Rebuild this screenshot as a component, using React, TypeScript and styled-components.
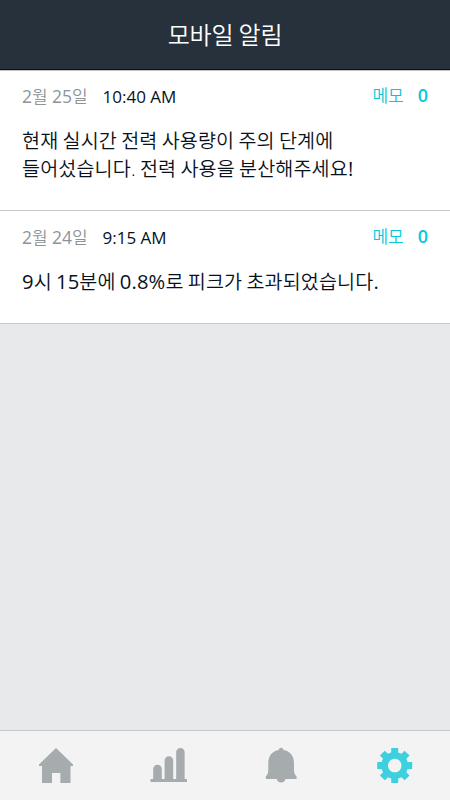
import React from 'react';
import styled, { createGlobalStyle } from 'styled-components';

const GlobalStyle = createGlobalStyle`
  * { box-sizing: border-box; }
  body { margin: 0; font-family: "Open Sans", "Noto Sans CJK KR", sans-serif; }
`;

const Screen = styled.div`
  width: 100%;
  height: 100vh;
  display: flex;
  flex-direction: column;
  background: #e8e9eb;
  overflow: hidden;
`;

const Header = styled.header`
  height: 70px;
  flex: none;
  display: flex;
  align-items: center;
  justify-content: center;
  padding-bottom: 2px;
  background: #26313c;
  border-bottom: 1px solid #0a131b;
`;

const Title = styled.h1`
  margin: 0;
  font: 350 24px/34px "Noto Sans CJK KR", sans-serif;
  letter-spacing: -0.2px;
  color: #fff;
`;

const List = styled.main`
  flex: 1;
  min-height: 0;
`;

const Card = styled.article`
  padding: 14px 22px 27px;
  background: #fff;
  border-bottom: 1px solid #c5c7c9;

  &:first-child {
    box-shadow: inset 0 1px #bfc1c3;
  }
`;

const Meta = styled.div`
  height: 26px;
  display: flex;
  align-items: baseline;
  font-size: 17px;
  font-weight: 350;
  line-height: 26px;
`;

const DateText = styled.span`
  width: 80.5px;
  color: #8d9499;
`;

const Latin = styled.span`
  font-size: 1.03em;
  font-weight: 400;
  line-height: 1;
`;

const Time = styled.span`
  font-weight: 400;
  color: #08121c;
`;

const Memo = styled.span`
  margin: -1px 0 0 auto;
  display: flex;
  align-items: baseline;
  gap: 14px;
  color: #06c8d9;
  position: relative;
  top: -1px;
`;

const Count = styled.b`
  font-size: 18px;
  font-weight: 600;
`;

const Message = styled.p`
  margin: 17px 0 0;
  font-size: 19.6px;
  font-weight: 350;
  line-height: 28px;
  letter-spacing: 0.12px;
  word-spacing: -1px;
  color: #08121c;
  white-space: pre-line;
`;

const Nav = styled.nav`
  height: 70px;
  flex: none;
  display: grid;
  grid-template-columns: repeat(4, 1fr);
  background: #f3f3f3;
  border-top: 1px solid #c8c9cb;
`;

const Tab = styled.button<{ $active?: boolean }>`
  display: flex;
  justify-content: center;
  padding: 15px 0 0;
  border: 0;
  background: none;
  color: ${(p) => (p.$active ? '#3dd0df' : '#a6abae')};
`;

const Icon = styled.svg`
  width: 40px;
  height: 40px;
  fill: currentColor;
`;

const alerts = [
  {
    date: '2월 25일',
    time: '10:40 AM',
    text: '현재 실시간 전력 사용량이 주의 단계에\n들어섰습니다. 전력 사용을 분산해주세요!',
    memos: 0,
  },
  { date: '2월 24일', time: '9:15 AM', text: '9시 15분에 0.8%로 피크가 초과되었습니다.', memos: 0 },
];

const tabs = [
  { label: '홈', path: 'M20 2 L37 18.5 V20 H34.5 V37 H24.4 V27 H16 V37 H6 V20 H3 V18.5 Z' },
  {
    label: '통계',
    path: 'M1.5 33 H4.2 V23 A4.3 4.3 0 0 1 12.8 23 V33 H15.6 V14.5 A4.3 4.3 0 0 1 24.2 14.5 V33 H27.2 V6.3 A4.2 4.2 0 0 1 35.6 6.3 V33 H38 V36 H1.5 Z',
  },
  {
    label: '알림',
    path: 'M17.8 4 A2.3 2.3 0 0 1 22.4 4 C29 5 33 10 33 17 V24 C33 27 34 29 35.6 30.3 V33 H24.5 A4.5 4.3 0 0 1 15.7 33 H4.8 V30.3 C6.4 29 7.3 27 7.3 24 V17 C7.3 10 11.3 5 17.8 4 Z',
  },
];

const gearTeeth = [0, 45, 90, 135, 180, 225, 270, 315];

// Numbers and closing marks take the regular weight so they balance the lighter Hangul.
const mixed = (text: string) =>
  text.split(/([0-9][0-9.%]*|[.!]$)/).map((part, i) => (i % 2 ? <Latin key={i}>{part}</Latin> : part));

export default function App() {
  return (
    <>
      <GlobalStyle />
      <Screen>
        <Header>
          <Title>모바일 알림</Title>
        </Header>
        <List>
          {alerts.map((a) => (
            <Card key={a.date}>
              <Meta>
                <DateText>{mixed(a.date)}</DateText>
                <Time>{a.time}</Time>
                <Memo>
                  메모 <Count>{a.memos}</Count>
                </Memo>
              </Meta>
              <Message>{mixed(a.text)}</Message>
            </Card>
          ))}
        </List>
        <Nav>
          {tabs.map((t) => (
            <Tab key={t.label} aria-label={t.label}>
              <Icon viewBox="0 0 40 40">
                <path d={t.path} />
              </Icon>
            </Tab>
          ))}
          <Tab $active aria-label="설정">
            <Icon viewBox="0 0 40 40">
              <path
                fillRule="evenodd"
                d="M20.7 6 A13.5 13.5 0 1 1 20.6 6 Z M20.7 12.7 A6.8 6.8 0 1 0 20.8 12.7 Z"
              />
              {gearTeeth.map((deg) => (
                <path key={deg} d="M17.2 2 H24.2 V9 H17.2 Z" transform={`rotate(${deg} 20.7 19.5)`} />
              ))}
            </Icon>
          </Tab>
        </Nav>
      </Screen>
    </>
  );
}
